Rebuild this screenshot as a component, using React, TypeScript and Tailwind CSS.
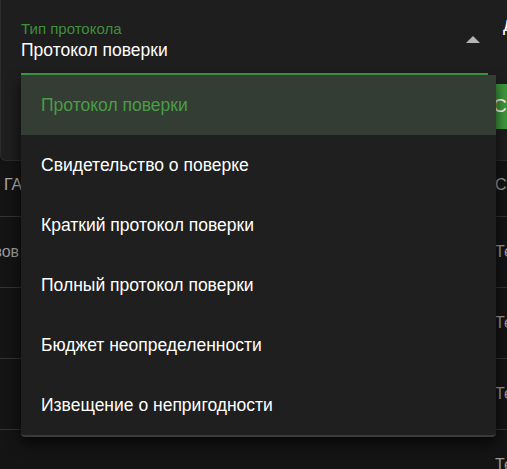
import { useState } from 'react'

const options = [
  'Протокол поверки',
  'Свидетельство о поверке',
  'Краткий протокол поверки',
  'Полный протокол поверки',
  'Бюджет неопределенности',
  'Извещение о непригодности',
]

const rows = [
  { left: 'ГАЗ', right: 'Ст', head: true },
  { left: 'Газов', right: 'Те', head: false },
  { left: '', right: 'Те', head: false },
  { left: '', right: 'Те', head: false },
  { left: '', right: 'Те', head: false },
]

export default function App() {
  const [selected, setSelected] = useState(options[0])

  return (
    <div
      className="relative w-[507px] h-[469px] overflow-hidden bg-[#141414]"
      style={{ fontFamily: '"Liberation Sans", Arial, sans-serif' }}
    >
      {/* card with the select */}
      <div className="flex w-[530px] h-[161px] rounded-b-md border border-t-0 border-[#2c2c2c] bg-[#1e1e1e]">
        <div className="ml-[20px] w-[475px] flex flex-col">
          <div className="flex items-end justify-between h-[73px] pb-[13px]">
            <div className="flex flex-col">
              <span className="text-[15px] leading-[17px] text-[#3f8f3c]">Тип протокола</span>
              <span className="mt-[3px] text-[17.5px] leading-[20px] text-white">{selected}</span>
            </div>
            <div className="mr-[8px] mb-[17px] w-0 h-0 border-l-[7px] border-r-[7px] border-b-[7px] border-l-transparent border-r-transparent border-b-[#b5b5b5]" />
          </div>
          <div className="h-[2px] bg-[#43a047]" />
        </div>
        <div className="ml-[1px] flex flex-col">
          <span className="mt-[14px] ml-[14px] text-[20px] leading-[20px] text-white">д</span>
          <div className="mt-[50px] h-[45px] w-[40px] rounded-l-sm bg-[#3f9a3d] flex items-center pl-[4px] text-[19px] text-white">
            С
          </div>
        </div>
      </div>

      {/* table behind */}
      <div className="flex flex-col">
        {rows.map((r, i) => (
          <div
            key={i}
            className={
              r.head
                ? 'flex items-start justify-between h-[56px] pt-[12px] border-b border-[#333333]'
                : 'flex items-center justify-between h-[71px] border-b border-[#333333]'
            }
          >
            <span className={r.head ? 'ml-[4px] text-[16px] text-[#a9a9a9]' : '-ml-[22px] text-[16px] text-[#9a9a9a]'}>
              {r.left}
            </span>
            <span className="w-[12px] overflow-hidden whitespace-nowrap text-[16px] text-[#9a9a9a]">
              {r.right}
            </span>
          </div>
        ))}
      </div>

      {/* open dropdown menu */}
      <ul className="absolute left-[21px] top-[75px] w-[475px] rounded-b bg-[#1f1f1f] border-b-2 border-[#3a3a3a] shadow-[0_6px_14px_rgba(0,0,0,0.7)]">
        {options.map((o) => (
          <li
            key={o}
            onClick={() => setSelected(o)}
            className={
              o === selected
                ? 'flex items-center h-[60px] px-[20px] bg-[#343d34] text-[17.5px] text-[#4a9c46] cursor-pointer'
                : 'flex items-center h-[60px] px-[20px] text-[17.5px] text-white cursor-pointer'
            }
          >
            {o}
          </li>
        ))}
      </ul>
    </div>
  )
}
